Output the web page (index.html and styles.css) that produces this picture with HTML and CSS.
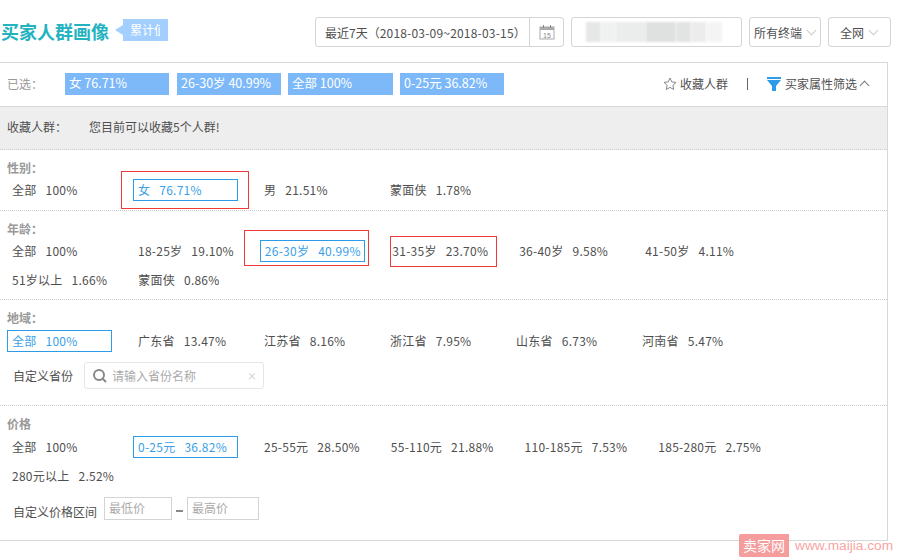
FILE: index.html
```html
<!DOCTYPE html>
<html lang="zh-CN">
<head>
    <meta charset="UTF-8">
    <title>买家人群画像</title>
    <link rel="stylesheet" href="styles.css">
</head>
<body>

    <div class="header">
        <h1>买家人群画像</h1>
        <div class="tip"><span>累计值</span></div>
        <div class="tools">
            <div class="tool date">
                <span class="date-text">最近7天（<span class="date-range">2018-03-09~2018-03-15</span>）</span>
                <span class="date-icon">
                    <svg width="16" height="15" viewBox="0 0 16 15">
                        <rect x="1" y="2" width="14" height="12" fill="#fff" stroke="#aaa"/>
                        <rect x="1" y="2" width="14" height="3" fill="#aaa"/>
                        <rect x="4" y="0" width="1" height="3" fill="#888"/>
                        <rect x="11" y="0" width="1" height="3" fill="#888"/>
                        <text x="8" y="12.5" font-size="7" text-anchor="middle" fill="#888" font-family="Liberation Sans">15</text>
                    </svg>
                </span>
            </div>
            <div class="tool shop">
                <i class="m1"></i><i class="m2"></i><i class="m3"></i><i class="m4"></i><i class="m5"></i><i class="m6"></i><i class="m7"></i>
            </div>
            <div class="tool pick term">所有终端<i class="down"></i></div>
            <div class="tool pick net">全网<i class="down"></i></div>
        </div>
    </div>

    <div class="panel">
        <div class="chosen">
            <span class="chosen-label">已选：</span>
            <span class="tag tag-first">女 76.71%</span>
            <span class="tag">26-30岁 40.99%</span>
            <span class="tag tag-wide">全部 100%</span>
            <span class="tag">0-25元 36.82%</span>
            <div class="chosen-right">
                <svg width="14" height="14" viewBox="0 0 14 14">
                    <path d="M7 1l1.8 3.9 4.2.5-3.1 2.9.8 4.2L7 10.4l-3.7 2.1.8-4.2L1 5.4l4.2-.5z" fill="none" stroke="#888"/>
                </svg>
                <span class="fav">收藏人群</span>
                <span class="bar"></span>
                <svg class="funnel" width="14" height="14" viewBox="0 0 14 14">
                    <path d="M0 0h14v2H0z" fill="#2e9be8"/>
                    <path d="M0 3h14L9 9v5H5V9z" fill="#2e9be8"/>
                </svg>
                <span>买家属性筛选</span>
                <i class="up"></i>
            </div>
        </div>

        <div class="saved">
            <span class="saved-label">收藏人群：</span>
            <span>您目前可以收藏5个人群!</span>
        </div>

        <div class="group group-sex">
            <h3>性别：</h3>
            <div class="options">
                <div class="opt"><b>全部</b>100%</div>
                <div class="opt on"><b>女</b>76.71%</div>
                <div class="opt"><b>男</b>21.51%</div>
                <div class="opt"><b>蒙面侠</b>1.78%</div>
            </div>
        </div>

        <div class="group group-age">
            <h3>年龄：</h3>
            <div class="options">
                <div class="opt"><b>全部</b>100%</div>
                <div class="opt"><b>18-25岁</b>19.10%</div>
                <div class="opt on"><b>26-30岁</b>40.99%</div>
                <div class="opt"><b>31-35岁</b>23.70%</div>
                <div class="opt"><b>36-40岁</b>9.58%</div>
                <div class="opt"><b>41-50岁</b>4.11%</div>
                <div class="opt"><b>51岁以上</b>1.66%</div>
                <div class="opt"><b>蒙面侠</b>0.86%</div>
            </div>
        </div>

        <div class="group group-area">
            <h3>地域：</h3>
            <div class="options">
                <div class="opt on"><b>全部</b>100%</div>
                <div class="opt"><b>广东省</b>13.47%</div>
                <div class="opt"><b>江苏省</b>8.16%</div>
                <div class="opt"><b>浙江省</b>7.95%</div>
                <div class="opt"><b>山东省</b>6.73%</div>
                <div class="opt"><b>河南省</b>5.47%</div>
            </div>
            <div class="custom">
                <span>自定义省份</span>
                <div class="search">
                    <svg width="16" height="16" viewBox="0 0 16 16">
                        <circle cx="7" cy="7" r="5" fill="none" stroke="#888" stroke-width="2"/>
                        <path d="M10.5 10.5l3.5 3.5" stroke="#888" stroke-width="2"/>
                    </svg>
                    <span class="hint">请输入省份名称</span>
                    <span class="clear">×</span>
                </div>
            </div>
        </div>

        <div class="group group-price">
            <h3>价格</h3>
            <div class="options">
                <div class="opt"><b>全部</b>100%</div>
                <div class="opt on"><b>0-25元</b>36.82%</div>
                <div class="opt"><b>25-55元</b>28.50%</div>
                <div class="opt"><b>55-110元</b>21.88%</div>
                <div class="opt"><b>110-185元</b>7.53%</div>
                <div class="opt"><b>185-280元</b>2.75%</div>
                <div class="opt"><b>280元以上</b>2.52%</div>
            </div>
            <div class="custom custom-price">
                <span class="custom-label">自定义价格区间</span>
                <div class="price-box">最低价</div>
                <i class="dash"></i>
                <div class="price-box">最高价</div>
            </div>
        </div>

        <!-- red marks over the chosen options -->
        <div class="mark mark-1"></div>
        <div class="mark mark-2"></div>
        <div class="mark mark-3"></div>
    </div>

    <div class="stamp"><span class="stamp-name">卖家网</span><span class="stamp-url">www.maijia.com</span></div>

</body>
</html>
```

FILE: styles.css
```css
* {
    box-sizing: border-box;
}
body {
    margin: 0;
    height: 557px;
    overflow: hidden;
    position: relative;
    background: #fff;
    color: #4f4f4f;
    font-family: "Noto Sans CJK SC", sans-serif;
    font-size: 12px;
}
i {
    display: block;
}

/* top bar */
.header {
    height: 62px;
    display: flex;
    padding: 17px 8px 0 1px;
}
h1 {
    margin: 0;
    width: 114px;
    height: 30px;
    color: #23b3c0;
    font-size: 18px;
    line-height: 28px;
    font-weight: bold;
    white-space: nowrap;
}
.tip {
    position: relative;
    width: 45px;
    height: 22px;
    margin: 2px 0 0 8px;
    padding-left: 7px;
    background: #a3cfff;
    color: #fff;
    line-height: 21px;
}
.tip:before {
    content: "";
    position: absolute;
    left: -8px;
    top: 6px;
    border: 5px solid transparent;
    border-left: 0;
    border-right: 8px solid #a3cfff;
}
.tip span {
    display: block;
    width: 30px;
    height: 22px;
    overflow: hidden;
    white-space: nowrap;
}
.tools {
    display: flex;
    margin-left: auto;
    gap: 7px;
}
.tool {
    height: 30px;
    border: 1px solid #d4d4d4;
    border-radius: 3px;
    display: flex;
    align-items: center;
}
.date {
    width: 249px;
}
.date-text {
    width: 213px;
    padding-left: 9px;
    white-space: nowrap;
}
.date-range {
    letter-spacing: .2px;
}
.date-icon {
    flex: 1;
    height: 100%;
    border-left: 1px solid #d4d4d4;
    display: flex;
    align-items: center;
    justify-content: center;
}
.shop {
    width: 171px;
    padding-left: 14px;
}
.shop i {
    height: 20px;
    filter: blur(1px);
}
.m1 { width: 15px; background: #e6e7e7; }
.m2 { width: 15px; background: #f0f1f1; }
.m3 { width: 30px; background: #ebecec; }
.m4 { width: 30px; background: #dfe0e0; }
.m5 { width: 15px; background: #e2e3e3; }
.m6 { width: 15px; background: #ececec; }
.m7 { width: 16px; background: #f4f4f4; }
.pick {
    justify-content: center;
}
.term {
    width: 72px;
    padding-left: 1px;
}
.net {
    width: 63px;
}
.down {
    width: 7px;
    height: 7px;
    margin: -4px 2px 0 6px;
    border-right: 1px solid #ccc;
    border-bottom: 1px solid #ccc;
    transform: rotate(45deg);
}

/* filter panel */
.panel {
    position: relative;
    width: 888px;
    height: 479px;
    border-top: 1px solid #d8d8d8;
    border-right: 1px solid #d8d8d8;
    border-bottom: 1px solid #d8d8d8;
}
.chosen {
    height: 44px;
    display: flex;
    align-items: center;
    gap: 7px;
    padding: 0 17px 2px 7px;
    border-bottom: 1px solid #d8d8d8;
}
.chosen-label {
    width: 51px;
    color: #999;
    font-family: "Noto Sans CJK TC", sans-serif;
}
.tag {
    width: 104px;
    height: 22px;
    padding-left: 4px;
    background: #7db9f8;
    color: #fff;
    font-size: 12.5px;
    line-height: 20px;
    white-space: nowrap;
}
.tag-first {
    margin-right: 1px;
}
.tag-wide {
    width: 105px;
}
.chosen-right {
    margin-left: auto;
    display: flex;
    align-items: center;
}
.fav {
    margin-left: 3px;
}
.bar {
    width: 1px;
    height: 12px;
    margin: 0 19px;
    background: #666;
}
.funnel {
    margin-right: 4px;
}
.up {
    width: 7px;
    height: 7px;
    margin: 4px 2px 0 4px;
    border-left: 1px solid #777;
    border-top: 1px solid #777;
    transform: rotate(45deg);
}
.saved {
    height: 43px;
    display: flex;
    align-items: center;
    padding: 0 0 3px 7px;
    background: #eee;
    border-bottom: 1px dotted #ccc;
}
.saved-label {
    width: 82px;
    font-family: "Noto Sans CJK TC", sans-serif;
}
.group {
    padding-top: 9px;
    border-bottom: 1px dotted #ccc;
}
.group-sex { height: 61px; }
.group-age { height: 89px; }
.group-area { height: 106px; }
.group-price { height: 134px; border-bottom: 0; }
h3 {
    margin: 0;
    padding-left: 7px;
    height: 18px;
    line-height: 18px;
    font-size: 12px;
    font-weight: bold;
    color: #999;
    font-family: "Noto Sans CJK TC", sans-serif;
}
.options {
    display: flex;
    flex-wrap: wrap;
    gap: 7px 21px;
    width: 770px;
    padding: 2px 0 0 7px;
}
.group-area .options,
.group-price .options {
    padding-top: 3px;
}
.opt {
    min-width: 105px;
    height: 22px;
    padding: 0 4px;
    border: 1px solid transparent;
    line-height: 20px;
    letter-spacing: .25px;
    white-space: nowrap;
}
.opt b {
    margin-right: 9px;
    font-weight: normal;
}
.opt.on {
    border-color: #2e9be8;
    color: #3a9fe8;
}
.group-age .opt.on {
    width: 105px;
    margin-right: 1.5px;
}
.custom {
    display: flex;
    align-items: center;
    margin-top: 10px;
    padding-left: 13px;
}
.search {
    display: flex;
    align-items: center;
    width: 180px;
    height: 27px;
    margin-left: 11px;
    padding: 0 6px 0 7px;
    border: 1px solid #e6e6e6;
    border-radius: 3px;
}
.hint {
    flex: 1;
    margin-left: 4px;
    color: #aaa;
}
.clear {
    color: #ccc;
    font-size: 10px;
}
.custom-price {
    margin-top: 10px;
}
.custom-label {
    padding-top: 5px;
}
.price-box {
    width: 68px;
    height: 23px;
    padding-left: 4px;
    border: 1px solid #d4d4d4;
    color: #aaa;
    line-height: 20px;
}
.price-box:nth-of-type(1) {
    margin-left: 7px;
}
.price-box:last-child {
    width: 72px;
}
.dash {
    width: 7px;
    height: 2px;
    margin: 4px 4px 0;
    background: #888;
}
.mark {
    position: absolute;
    border: 1px solid #f03a3a;
}
.mark-1 { left: 121px; top: 108px; width: 128px; height: 38px; }
.mark-2 { left: 244px; top: 167px; width: 125px; height: 36px; }
.mark-3 { left: 390px; top: 173px; width: 107px; height: 31px; }

/* site stamp in the corner */
.stamp {
    position: absolute;
    left: 739px;
    top: 534px;
    display: flex;
    align-items: center;
    height: 23px;
}
.stamp-name {
    width: 50px;
    height: 23px;
    background: #f59c9c;
    border-radius: 2px 0 0 2px;
    color: #fff;
    font-size: 14px;
    line-height: 22px;
    text-align: center;
}
.stamp-url {
    margin-left: 6px;
    color: #f7a5a5;
    font-family: "Liberation Sans", sans-serif;
    font-size: 13.7px;
}
```
